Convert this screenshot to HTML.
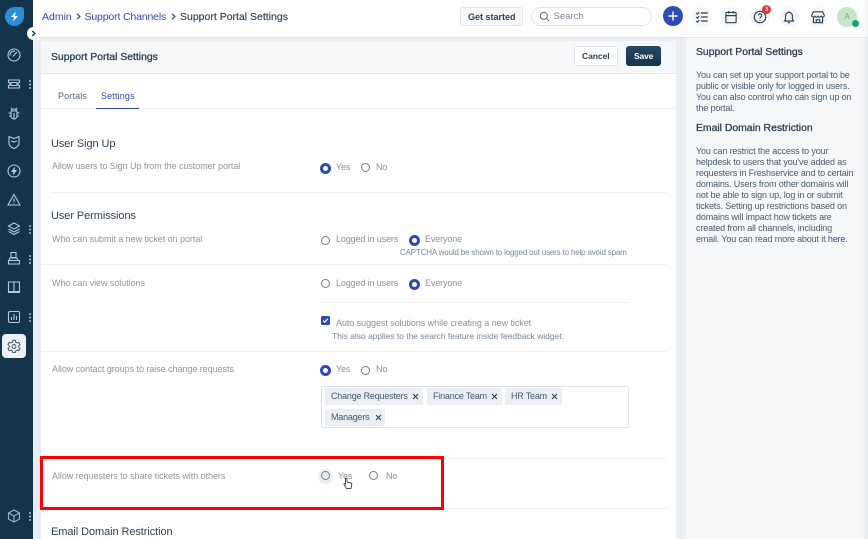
<!DOCTYPE html>
<html><head><meta charset="utf-8"><style>
html,body{margin:0;padding:0}
body{width:868px;height:539px;overflow:hidden;position:relative;background:#ebeff3;font-family:"Liberation Sans",sans-serif;}
#w{position:absolute;left:0;top:0;width:868px;height:539px;filter:blur(.3px)}
.t{position:absolute;white-space:nowrap;line-height:14px}
.b{position:absolute}
.lab{font-size:9px;letter-spacing:-.05px;color:#8d959d}
.opt{font-size:9px;color:#8a9299;letter-spacing:-.13px}
.h{font-size:11px;color:#2c4257;letter-spacing:-.08px}
.sb{font-size:10.4px;color:#2c3e50;-webkit-text-stroke:.3px currentColor}
.r{position:absolute;width:7px;height:7px;border:1.2px solid #6f7c87;border-radius:50%;background:#fff}
.r.on{width:5px;height:5px;border:3px solid #2f49b5}
.sep{position:absolute;height:1px;background:#eef0f3}
.chip{position:absolute;height:17px;background:#ebeff3;border-radius:2px;font-size:9px;color:#44586b;line-height:17px;padding-left:6px;letter-spacing:-.2px;white-space:nowrap;box-sizing:border-box}
.chip svg{position:absolute;top:5px;width:7px;height:7px}
.side{position:absolute;left:6px;width:16px;height:16px;fill:none;stroke:#b7cada;stroke-width:1.1}
.dots{position:absolute;left:28.5px;width:2px;height:9px;background:radial-gradient(circle at 1px 1px,#a8bccb 0.8px,transparent 1px) 0 0/2px 3.5px}
.ic{position:absolute;top:6.5px;width:20px;height:20px;border-radius:50%;background:#f3f5f7}
.ic svg{position:absolute;left:2px;top:2px;width:16px;height:16px;fill:none;stroke:#2c4257;stroke-width:1}
.p{position:absolute;left:696px;font-size:9px;line-height:11px;color:#475c6f;letter-spacing:-.14px;white-space:nowrap}
</style></head><body><div id="w">
<!-- top bar -->
<div class="b" style="left:0;top:0;width:868px;height:37px;background:#fff;border-bottom:1px solid #dfe4ea;box-sizing:content-box"></div>
<!-- side bar -->
<div class="b" style="left:0;top:0;width:33px;height:539px;background:#12344d"></div>
<div class="b" style="left:5px;top:7px;width:19px;height:19px;background:#2a8fd8;border-radius:50% 3px 50% 50%"></div>
<svg class="b" style="left:8px;top:10px" width="13" height="13" viewBox="0 0 13 13"><path d="M8 1.5 3 7h3.2L5 11.5 10 6H6.8z" fill="#fff"/></svg>
<div class="b" style="left:27px;top:27px;width:13px;height:13px;background:#fff;border-radius:50%"></div>
<svg class="b" style="left:30px;top:30px" width="7" height="7" viewBox="0 0 7 7"><path d="M2.2 1 5 3.5 2.2 6" fill="none" stroke="#12344d" stroke-width="1.3"/></svg>

<svg class="side" style="top:47px" viewBox="0 0 16 16"><circle cx="8" cy="8" r="6"/><path d="M6.800 9.500 11 5M4 8.500a4 4 0 0 1 5-4.300"/></svg>
<svg class="side" style="top:76px" viewBox="0 0 16 16"><path d="M2.500 4h11v2.500a1.500 1.500 0 0 0 0 3V12h-11V9.500a1.500 1.500 0 0 0 0-3zM5 6.500h6v3H5z"/></svg>
<div class="dots" style="top:80px"></div>
<svg class="side" style="top:105px" viewBox="0 0 16 16"><path d="M5 7a3 3 0 0 1 6 0v4a3 3 0 0 1-6 0zM5 6h6M8 8v6M5 3l1.500 1.500M11 3 9.500 4.500M5 8H2.500M11 8h2.500M5 11H3M11 11h2"/></svg>
<svg class="side" style="top:134px" viewBox="0 0 16 16"><path d="M3 2.500 8 4.500 13 2.500V9c0 2.500-2.500 4.500-5 5.500C5.500 13.500 3 11.500 3 9zM5 7l3 1 3-1"/></svg>
<svg class="side" style="top:163px" viewBox="0 0 16 16"><circle cx="8" cy="8" r="6"/><path d="M9 4.500 6 8.500h2.500L7 11.500 10 7.500H7.500z"/></svg>
<svg class="side" style="top:192px" viewBox="0 0 16 16"><path d="M8 2.500 14 13H2zM8 6.500v3.500M8 11v.8"/></svg>
<svg class="side" style="top:221px" viewBox="0 0 16 16"><path d="M8 2 13.500 5 8 8 2.500 5zM2.500 8 8 11l5.500-3M2.500 10.500 8 13.500l5.500-3"/></svg>
<div class="dots" style="top:225px"></div>
<svg class="side" style="top:250px" viewBox="0 0 16 16"><path d="M5 2.500h5v5H5zM4 8h7l1 2.500H3zM2.500 10.500h11v3.500h-11z"/></svg>
<div class="dots" style="top:255px"></div>
<svg class="side" style="top:279px" viewBox="0 0 16 16"><path d="M2.500 3H8v9.500H2.500zM8 3h5.500v9.500H8zM2 13.500h12"/></svg>
<svg class="side" style="top:309px" viewBox="0 0 16 16"><rect x="2.500" y="2.500" width="11" height="11" rx="1.500"/><path d="M5.500 11V8M8 11V5M10.500 11V7"/></svg>
<div class="dots" style="top:313px"></div>
<div class="b" style="left:2px;top:334px;width:24px;height:24px;background:#eef1f4;border-radius:4px"></div>
<svg class="b" style="left:7px;top:339px" width="14" height="14" viewBox="0 0 16 16"><path d="M6.600 1.500h2.800l.4 2 1.700 1 2-.6 1.400 2.400-1.500 1.400v1.800l1.500 1.400-1.400 2.400-2-.6-1.700 1-.4 2H6.600l-.4-2-1.700-1-2 .6-1.400-2.400 1.500-1.400V7.700L1.100 6.300l1.400-2.400 2 .6 1.700-1z" fill="none" stroke="#2c4257" stroke-width="1"/><circle cx="8" cy="8.600" r="2.200" fill="none" stroke="#2c4257" stroke-width="1"/></svg>
<svg class="side" style="top:508px" viewBox="0 0 16 16"><path d="M8 2 13.500 5v6L8 14 2.500 11V5zM2.500 5 8 8l5.500-3M8 8v6" stroke="#8fb4d2"/></svg>
<div class="dots" style="top:512px"></div>

<!-- breadcrumb -->
<div class="t" style="left:42px;top:10px;font-size:10.5px;color:#2f49b5">Admin</div>
<svg class="b" style="left:75.500px;top:13px" width="5" height="7" viewBox="0 0 5 7"><path d="M1 .8 4 3.500 1 6.200" fill="none" stroke="#2c4257" stroke-width="1.100"/></svg>
<div class="t" style="left:84.500px;top:10px;font-size:10.5px;color:#2f49b5;letter-spacing:-.15px">Support Channels</div>
<svg class="b" style="left:171px;top:13px" width="5" height="7" viewBox="0 0 5 7"><path d="M1 .8 4 3.500 1 6.200" fill="none" stroke="#2c4257" stroke-width="1.100"/></svg>
<div class="t" style="left:180px;top:10px;font-size:10.5px;color:#2c4257;-webkit-text-stroke:.15px currentColor">Support Portal Settings</div>

<!-- header controls -->
<div class="b" style="left:460px;top:7px;width:63px;height:19px;box-sizing:border-box;border:1px solid #dfe4ea;border-radius:3px;background:#f6f8f9"></div>
<div class="t" style="left:468px;top:10px;font-size:9px;font-weight:bold;color:#2c4257">Get started</div>
<div class="b" style="left:531px;top:7px;width:121px;height:19px;box-sizing:border-box;border:1px solid #dfe4ea;border-radius:10px;background:#fff"></div>
<svg class="b" style="left:539px;top:11px" width="11" height="11" viewBox="0 0 11 11"><circle cx="4.800" cy="4.800" r="3.500" fill="none" stroke="#56697b" stroke-width="1"/><path d="M7.500 7.500 10 10" stroke="#56697b" stroke-width="1"/></svg>
<div class="t" style="left:553.500px;top:10px;font-size:9.500px;color:#7c8a97">Search</div>
<div class="b" style="left:663px;top:6px;width:20px;height:20px;border-radius:50%;background:#2f49b5"></div>
<svg class="b" style="left:667px;top:10px" width="12" height="12" viewBox="0 0 12 12"><path d="M6 1.500v9M1.500 6h9" stroke="#fff" stroke-width="1.400"/></svg>
<div class="ic" style="left:692px"><svg viewBox="0 0 14 14"><path d="M6 3.500h6M6 7h6M6 10.500h6M2 3.500l1 1 1.500-1.800M2 7l1 1 1.500-1.800M2 10.500l1 1 1.500-1.800"/></svg></div>
<div class="ic" style="left:721px"><svg viewBox="0 0 14 14"><rect x="2.500" y="3" width="9" height="9" rx="1"/><path d="M2.500 5.800h9M5 1.800V4M9 1.800V4"/></svg></div>
<div class="ic" style="left:750px"><svg viewBox="0 0 14 14"><circle cx="7" cy="7" r="5"/><path d="M5.500 5.600a1.500 1.500 0 1 1 2.300 1.300C7.200 7.300 7 7.600 7 8.300M7 9.500v.9"/></svg></div>
<div class="b" style="left:762px;top:5px;width:9px;height:9px;border-radius:50%;background:#e43538;color:#fff;font-size:6.500px;line-height:9px;text-align:center">3</div>
<div class="ic" style="left:779px"><svg viewBox="0 0 14 14"><path d="M3 10.500h8L10 9V6a3 3 0 0 0-6 0v3zM6 12h2M7 2v1"/></svg></div>
<div class="ic" style="left:808px"><svg viewBox="0 0 14 14"><path d="M3 2.500h8l1.500 3a1.300 1.300 0 0 1-2.700.3 1.400 1.400 0 0 1-2.800 0 1.400 1.400 0 0 1-2.800 0A1.300 1.300 0 0 1 1.500 5.500zM3 7.500v4.500h8V7.500M5.500 12V9.500h3V12"/></svg></div>
<div class="b" style="left:837px;top:7px;width:20px;height:20px;border-radius:50%;background:#c5e6c8;color:#7d9c88;font-size:8px;line-height:20px;text-align:center">A</div>
<div class="b" style="left:852px;top:20px;width:7px;height:7px;border-radius:50%;background:#0fa07a"></div>
<div class="b" style="left:862px;top:0;width:6px;height:539px;background:linear-gradient(90deg,rgba(235,239,243,0),rgba(225,230,235,.5))"></div>

<!-- main card -->
<div class="b" style="left:33px;top:38px;width:8px;height:501px;background:#e9edf3"></div>
<div class="b" style="left:41px;top:41px;width:635px;height:498px;background:#fff"></div>
<div class="b" style="left:41px;top:41px;width:635px;height:33px;background:#f5f7f9;border-bottom:1px solid #e3e7ec;box-sizing:border-box"></div>
<div class="t sb" style="left:51px;top:50.500px;color:#2c4257">Support Portal Settings</div>
<div class="b" style="left:574px;top:46px;width:44px;height:20px;box-sizing:border-box;border:1px solid #dfe4ea;border-radius:3px;background:#fff"></div>
<div class="t" style="left:582px;top:49px;font-size:8.500px;font-weight:bold;color:#2c4257;letter-spacing:-.05px">Cancel</div>
<div class="b" style="left:626px;top:46px;width:35px;height:20px;border-radius:3px;background:linear-gradient(#264863,#12344d)"></div>
<div class="t" style="left:634px;top:49px;font-size:8.500px;font-weight:bold;color:#fff;letter-spacing:-.15px">Save</div>

<div class="t" style="left:58px;top:89px;font-size:9px;color:#55677a;letter-spacing:.15px">Portals</div>
<div class="t" style="left:101px;top:89px;font-size:9px;color:#2f49b5;letter-spacing:.15px">Settings</div>
<div class="b" style="left:41px;top:108px;width:635px;height:1px;background:#eef0f3"></div>
<div class="b" style="left:96px;top:108px;width:43px;height:1px;background:#2f49b5"></div>

<div class="t h" style="left:51px;top:137px">User Sign Up</div>
<div class="t lab" style="left:52px;top:159px">Allow users to Sign Up from the customer portal</div>
<div class="r on" style="left:320px;top:162.500px"></div><div class="t opt" style="left:336px;top:159.500px">Yes</div>
<div class="r" style="left:361.300px;top:163px"></div><div class="t opt" style="left:376px;top:159.500px">No</div>
<div class="sep" style="left:51px;top:192px;width:616px"></div>

<div class="t h" style="left:51px;top:209px">User Permissions</div>
<div class="t lab" style="left:52px;top:232px">Who can submit a new ticket on portal</div>
<div class="r" style="left:320.600px;top:235.600px"></div><div class="t opt" style="left:336px;top:232px">Logged in users</div>
<div class="r on" style="left:409px;top:234.500px"></div><div class="t opt" style="left:425px;top:232px">Everyone</div>
<div class="t" style="left:400px;top:245.500px;font-size:8px;color:#76879a;letter-spacing:-.17px">CAPTCHA would be shown to logged out users to help avoid spam</div>
<div class="sep" style="left:41px;top:264px;width:626px"></div>

<div class="t lab" style="left:52px;top:276px">Who can view solutions</div>
<div class="r" style="left:320.600px;top:279.300px"></div><div class="t opt" style="left:336px;top:276px">Logged in users</div>
<div class="r on" style="left:409px;top:278.500px"></div><div class="t opt" style="left:425px;top:276px">Everyone</div>
<div class="sep" style="left:321px;top:302px;width:308px"></div>
<div class="b" style="left:321px;top:316px;width:9px;height:9px;background:#2f49b5;border-radius:1.500px"></div>
<svg class="b" style="left:321px;top:316px" width="9" height="9" viewBox="0 0 9 9"><path d="M2.200 4.600 3.800 6.200 6.800 2.800" fill="none" stroke="#fff" stroke-width="1.200"/></svg>
<div class="t opt" style="left:336px;top:315.500px;letter-spacing:-.06px">Auto suggest solutions while creating a new ticket</div>
<div class="t" style="left:332px;top:329px;font-size:8.500px;color:#76879a;letter-spacing:-.04px">This also applies to the search feature inside feedback widget.</div>
<div class="sep" style="left:41px;top:351px;width:626px"></div>

<div class="t lab" style="left:52px;top:362px">Allow contact groups to raise change requests</div>
<div class="r on" style="left:320px;top:365px"></div><div class="t opt" style="left:336px;top:362px">Yes</div>
<div class="r" style="left:361.300px;top:366px"></div><div class="t opt" style="left:376px;top:362px">No</div>
<div class="b" style="left:321px;top:386px;width:308px;height:42px;box-sizing:border-box;border:1px solid #dfe4ea;border-radius:2px;background:#fff"></div>
<div class="chip" style="left:325px;top:388px;width:98px">Change Requesters<svg style="left:87px" viewBox="0 0 7 7"><path d="M1 1l5 5M6 1 1 6" stroke="#2c4257" stroke-width="1.100"/></svg></div>
<div class="chip" style="left:427px;top:388px;width:75px">Finance Team<svg style="left:64px" viewBox="0 0 7 7"><path d="M1 1l5 5M6 1 1 6" stroke="#2c4257" stroke-width="1.100"/></svg></div>
<div class="chip" style="left:505px;top:388px;width:57px">HR Team<svg style="left:46px" viewBox="0 0 7 7"><path d="M1 1l5 5M6 1 1 6" stroke="#2c4257" stroke-width="1.100"/></svg></div>
<div class="chip" style="left:325px;top:409px;width:60px">Managers<svg style="left:50px" viewBox="0 0 7 7"><path d="M1 1l5 5M6 1 1 6" stroke="#2c4257" stroke-width="1.100"/></svg></div>
<div class="sep" style="left:41px;top:458px;width:626px"></div>

<div class="t lab" style="left:52px;top:469px">Allow requesters to share tickets with others</div>
<div class="b" style="left:318px;top:468.500px;width:15px;height:15px;border-radius:50%;background:#e8eef3"></div>
<div class="r" style="left:320.600px;top:471.300px;background:transparent"></div><div class="t opt" style="left:338px;top:469px">Yes</div>
<div class="r" style="left:369px;top:471.300px"></div><div class="t opt" style="left:386px;top:469px">No</div>
<svg class="b" style="left:343px;top:477px" width="10" height="13" viewBox="0 0 10 13"><path d="M2.500 1.500a.8.800 0 0 1 1.500 0V5l3.500.8c1 .2 1.500 1 1.300 2L8 11.500H3.500L1 7.500c-.3-.8.500-1.200 1.500-.5z" fill="#fff" stroke="#222" stroke-width=".8"/></svg>
<div class="sep" style="left:41px;top:508px;width:626px"></div>

<div class="t h" style="left:51px;top:525px">Email Domain Restriction</div>

<!-- red box -->
<div class="b" style="left:40px;top:456px;width:404px;height:54px;box-sizing:border-box;border:3px solid #f00"></div>

<!-- right panel -->
<div class="b" style="left:686px;top:38px;width:182px;height:501px;background:#f5f7f9"></div>
<div class="b" style="left:862px;top:38px;width:6px;height:501px;background:linear-gradient(90deg,rgba(235,239,243,0),rgba(228,232,237,.8))"></div>
<div class="t sb" style="left:696px;top:46px">Support Portal Settings</div>
<div class="p" style="top:70px">You can set up your support portal to be<br>public or visible only for logged in users.<br>You can also control who can sign up on<br>the portal.</div>
<div class="t sb" style="left:696px;top:122px">Email Domain Restriction</div>
<div class="p" style="top:146px">You can restrict the access to your<br>helpdesk to users that you've added as<br>requesters in Freshservice and to certain<br>domains. Users from other domains will<br>not be able to sign up, log in or submit<br>tickets. Setting up restrictions based on<br>domains will impact how tickets are<br>created from all channels, including<br>email. You can read more about it <span style="color:#2f49b5">here.</span></div>
</div></body></html>
